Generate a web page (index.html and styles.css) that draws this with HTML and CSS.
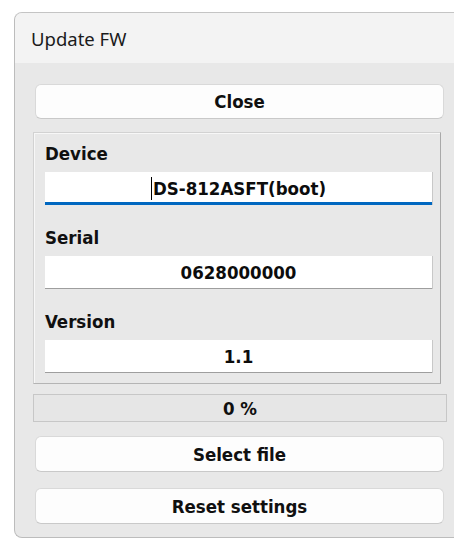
FILE: index.html
```html
<!DOCTYPE html>
<html lang="en">
<head>
<meta charset="utf-8">
<title>Update FW</title>
<link rel="stylesheet" href="styles.css">
</head>
<body>
<div class="window">
  <div class="titlebar">Update FW</div>
  <div class="content">
    <button class="btn btn-close">Close</button>
    <div class="group">
      <div class="field">
        <div class="label">Device</div>
        <div class="input focused"><span class="caret"></span>DS-812ASFT(boot)</div>
      </div>
      <div class="field">
        <div class="label">Serial</div>
        <div class="input">0628000000</div>
      </div>
      <div class="field">
        <div class="label">Version</div>
        <div class="input">1.1</div>
      </div>
    </div>
    <div class="progress">0 %</div>
    <button class="btn btn-select">Select file</button>
    <button class="btn btn-reset">Reset settings</button>
  </div>
</div>
</body>
</html>
```

FILE: styles.css
```css
* {
  box-sizing: border-box;
}

html, body {
  margin: 0;
  padding: 0;
  background: #ffffff;
  height: 540px;
  overflow: hidden;
}

body {
  padding: 12px 0 0 14px;
  font-family: "DejaVu Sans Condensed", "DejaVu Sans", sans-serif;
  color: #101010;
}

.window {
  width: 440px;
  height: 526px;
  border-top: 1px solid #c4c4c4;
  border-left: 1px solid #bcbcbc;
  border-bottom: 1px solid #bcbcbc;
  border-radius: 8px 0 0 8px;
  background: #e8e8e8;
  overflow: hidden;
  display: flex;
  flex-direction: column;
}

.titlebar {
  height: 50px;
  flex: none;
  display: flex;
  align-items: center;
  padding-left: 16px;
  background: #f3f3f3;
  font-family: "Noto Sans", "Open Sans", sans-serif;
  font-size: 18.5px;
  color: #1b1b1b;
}

.content {
  display: flex;
  flex-direction: column;
  padding: 21px 7px 0 18px;
}

.btn {
  height: 35px;
  margin: 0 3px 0 2px;
  padding: 0;
  background: #fdfdfd;
  border: 1px solid #d9d9d9;
  border-bottom-color: #c9c9c9;
  border-radius: 6px;
  font-family: "DejaVu Sans Condensed", "DejaVu Sans", sans-serif;
  font-weight: bold;
  font-size: 18.5px;
  color: #101010;
}

.btn-close {
  margin-bottom: 13px;
}

.btn-select {
  margin-top: 14px;
  height: 36px;
}

.btn-reset {
  margin-top: 16px;
  height: 36px;
}

.group {
  margin-right: 6px;
  padding: 10px 8px 10px 11px;
  border: 1px solid #d2d2d2;
  border-right-color: #a9a9a9;
  border-bottom-color: #b4b4b4;
  box-shadow: inset 1px 1px 0 #f7f7f7;
  display: flex;
  flex-direction: column;
  gap: 22px;
}

.label {
  font-weight: bold;
  font-size: 18.5px;
  line-height: 22px;
  margin-bottom: 7px;
}

.input {
  height: 33px;
  background: #ffffff;
  border-bottom: 1px solid #9e9e9e;
  box-shadow: 1px 0 0 #c8c8c8;
  display: flex;
  align-items: center;
  justify-content: center;
  font-weight: bold;
  font-size: 18.5px;
  color: #0c0c0c;
}

.input.focused {
  border-bottom: 3px solid #0067c0;
  padding-top: 2px;
}

.caret {
  width: 1px;
  height: 23px;
  background: #000000;
  margin-right: 1px;
}

.progress {
  margin-top: 10px;
  height: 28px;
  border: 1px solid #c7c7c7;
  background: #e6e6e6;
  display: flex;
  align-items: center;
  justify-content: center;
  font-weight: bold;
  font-size: 18.5px;
}
```
